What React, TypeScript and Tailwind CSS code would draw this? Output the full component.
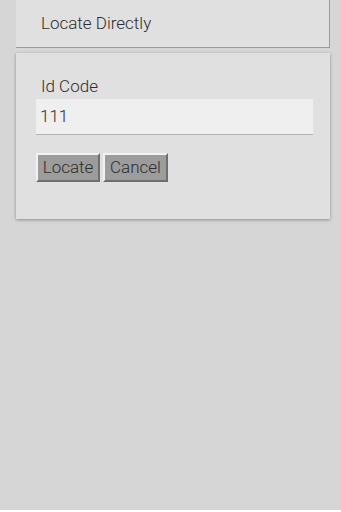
export default function App() {
  return (
    <div className="min-h-[512px] w-full bg-[#d6d6d6] font-['Roboto',sans-serif] text-[#2e2e2e]">
      <div className="ml-[16px] mr-[11px] -mt-[2px] flex h-[50px] items-center border-b border-r border-[#9a9a9a] bg-[#e0e0e0] pl-[25px] pt-[2px] text-[17px] font-light">
        Locate Directly
      </div>
      <div className="ml-[16px] mr-[11px] mt-[5px] h-[166px] bg-[#e0e0e0] pl-[20px] pr-[17px] pt-[23px] shadow-[0_1px_3px_rgba(0,0,0,0.35)]">
        <label className="block pl-[5px] text-[17px] font-light leading-[20px]">Id Code</label>
        <div className="mt-[3px] flex h-[36px] items-center border-b border-[#b5b5b5] bg-[#efefef] px-[4px] text-[17px] font-light">
          111
        </div>
        <div className="mt-[18px] flex gap-[3px]">
          <button className="h-[29px] w-[64px] border-2 border-t-[#f2f2f2] border-l-[#f2f2f2] border-b-[#6e6e6e] border-r-[#6e6e6e] bg-[#9c9c9c] text-[17px] font-light text-[#2e2e2e]">
            Locate
          </button>
          <button className="h-[29px] w-[65px] border-2 border-t-[#f2f2f2] border-l-[#f2f2f2] border-b-[#6e6e6e] border-r-[#6e6e6e] bg-[#9c9c9c] text-[17px] font-light text-[#2e2e2e]">
            Cancel
          </button>
        </div>
      </div>
    </div>
  );
}
